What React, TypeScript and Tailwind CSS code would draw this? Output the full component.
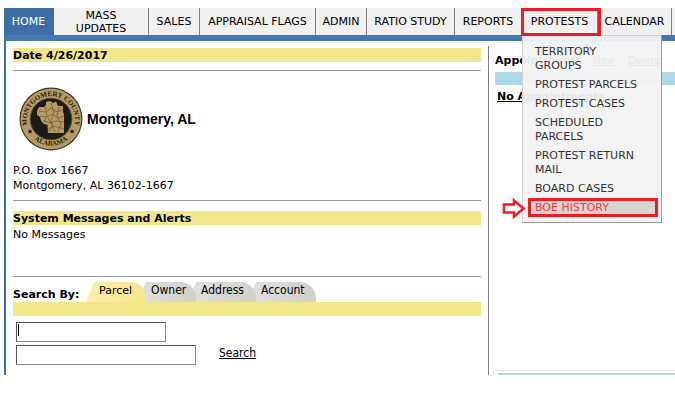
import clsx from 'clsx';

const NAV_ITEMS = [
  { label: 'HOME', width: 'w-[50px]', active: true },
  { label: 'MASS UPDATES', width: 'w-[95px]' },
  { label: 'SALES', width: 'w-[51px]' },
  { label: 'APPRAISAL FLAGS', width: 'w-[116px]' },
  { label: 'ADMIN', width: 'w-[51px]' },
  { label: 'RATIO STUDY', width: 'w-[88px]' },
  { label: 'REPORTS', width: 'w-[67px]' },
  { label: 'PROTESTS', width: 'w-[76px]', menu: true },
  { label: 'CALENDAR', width: 'w-[74px]' },
];

const PROTEST_ITEMS = [
  'TERRITORY GROUPS',
  'PROTEST PARCELS',
  'PROTEST CASES',
  'SCHEDULED PARCELS',
  'PROTEST RETURN MAIL',
  'BOARD CASES',
  'BOE HISTORY',
];

const TABS = [
  { label: 'Parcel', className: 'z-40 w-[60px] from-[#fbf0ae] to-[#f6e58a] pt-px' },
  { label: 'Owner', className: 'z-30 -ml-2 w-[58px]' },
  { label: 'Address', className: 'z-20 -ml-2 w-[68px]' },
  { label: 'Account', className: 'z-10 -ml-2 w-[68px]' },
];

const CONDENSED = "font-['DejaVu_Sans_Condensed','DejaVu_Sans',sans-serif]";

function ProtestsMenu() {
  return (
    <ul className="absolute top-[27px] left-0 z-10 w-[140px] border border-[#d0d0d0] border-r-[#999] border-b-[#999] bg-[#f2f2f3]/95 pt-[6px] pr-[3px] pb-[5px] pl-[5px] text-left text-[#333]">
      {PROTEST_ITEMS.map((item) => {
        const selected = item === 'BOE HISTORY';
        return (
          <li key={item} className={clsx('relative', selected && 'bg-[#d5d5d5] text-[#ff3333]')}>
            <a href="#" className="block pt-[3px] pr-3 pb-[2px] pl-[7px] leading-[14px]">
              {item}
            </a>
            {selected && (
              <>
                <span className="pointer-events-none absolute inset-0 border-3 border-[#ed1c24]" />
                <svg className="absolute top-0 -left-[26px] h-[21px] w-6" viewBox="0 0 24 21" fill="none" stroke="#ed1c24" strokeWidth="2.6">
                  <path d="M2 6.5H12V2.5L21.5 10.5L12 18.5V14.5H2Z" />
                </svg>
              </>
            )}
          </li>
        );
      })}
    </ul>
  );
}

function NavBar() {
  return (
    <nav className="border-b-6 border-[#4677b0] bg-[#f0f0f0]">
      <ul className="flex h-[27px]">
        {NAV_ITEMS.map(({ label, width, active, menu }) => (
          <li
            key={label}
            className={clsx(
              'relative shrink-0 border-r text-center',
              width,
              active ? 'border-[#3d6da5] bg-[#3d6da5] text-white' : 'border-[#808080]',
            )}
          >
            <a href="#" className="flex h-full items-center justify-center px-[6px] leading-[13px]">
              {label}
            </a>
            {menu && (
              <>
                <ProtestsMenu />
                <span className="pointer-events-none absolute top-0 -right-1 -bottom-px -left-px z-20 border-3 border-[#ed1c24]" />
              </>
            )}
          </li>
        ))}
      </ul>
    </nav>
  );
}

function CountySeal() {
  return (
    <svg className="size-16" viewBox="0 0 64 64" role="img" aria-label="Montgomery County Alabama seal">
      <defs>
        <path id="seal-top" d="M12.4 47A24 24 0 1 1 51.6 47" />
        <path id="seal-bottom" d="M8 44A27 27 0 0 0 56 44" />
      </defs>
      <circle cx="32" cy="32" r="31.5" fill="#423a2b" />
      <circle cx="32" cy="32" r="29.8" fill="#b59b62" stroke="#c8b27b" strokeWidth=".7" />
      <circle cx="32" cy="32" r="20.8" fill="#1d1b19" stroke="#594b32" strokeWidth="1" />
      <path
        d="M18 24L20 20H25L27 18V15L31 14L34 16L37 14.5L39 19H44V25L45 27V46H29L28.5 38L25 37L22 34L21 30L18 28Z"
        fill="#b59b62"
      />
      <path
        d="M20 24L27 25L32 21L38 25L44 23M21 29L28 30L33 27L39 31L45 29M26 20L28 28L25 35M32 16L35 25L32 35L36 45M40 20L38 29L42 37L39 45M25 34L31 36L37 34L45 35M29 42L35 39L45 42M29 31L34 39L30 45"
        fill="none"
        stroke="#5d4c30"
        strokeWidth=".6"
      />
      <g fill="#211b12" className="font-['Liberation_Serif',serif] text-[7px] font-bold">
        <text textAnchor="middle">
          <textPath href="#seal-top" startOffset="50%">MONTGOMERY COUNTY</textPath>
        </text>
        <text textAnchor="middle">
          <textPath href="#seal-bottom" startOffset="50%">ALABAMA</textPath>
        </text>
      </g>
      <path
        d="M11 42l.8 1.5 1.7.2-1.2 1.2.3 1.7-1.6-.8-1.5.8.3-1.7-1.2-1.2 1.7-.2zM53 42l.8 1.5 1.7.2-1.2 1.2.3 1.7-1.6-.8-1.5.8.3-1.7-1.2-1.2 1.7-.2z"
        fill="#211b12"
      />
    </svg>
  );
}

function SearchPanel() {
  const inputClass =
    'block h-5 border border-[#555] border-r-[#888] border-b-[#888] bg-white px-[2px] outline-none';

  return (
    <form onSubmit={(e) => e.preventDefault()}>
      <div className="mt-[5px] flex h-5">
        <span className="w-[73px] shrink-0 pt-[5px] font-bold">Search By:</span>
        {TABS.map(({ label, className }) => (
          <button
            key={label}
            type="button"
            className={clsx(
              'relative flex h-5 shrink-0 items-start rounded-tr-[16px] bg-linear-to-r pl-[13px] leading-4 [clip-path:polygon(8px_0,100%_0,100%_100%,0_100%)]',
              label !== 'Parcel' && ['from-[#e2e1de] to-[#d2d0ca] text-xs leading-4', CONDENSED],
              className,
            )}
          >
            {label}
          </button>
        ))}
      </div>
      <div className="h-[14px] bg-[#f0e68c]" />
      <div className="mt-[6px] space-y-[3px] pl-[3px]">
        <div className="relative">
          <input type="text" aria-label="Parcel" className={clsx(inputClass, 'w-[150px]')} />
          {/* text cursor */}
          <span className="absolute top-[2px] left-[2px] h-3 w-px bg-black" />
        </div>
        <div className="flex items-start">
          <input type="text" aria-label="Parcel detail" className={clsx(inputClass, 'w-[180px]')} />
          <a href="#" className={clsx('ml-[23px] text-xs leading-4 underline', CONDENSED)}>
            Search
          </a>
        </div>
      </div>
    </form>
  );
}

function Appointments() {
  return (
    <aside className="mt-[5px] flex w-[187px] shrink-0 flex-col border-l border-[#808080] pt-[7px]">
      <div className="flex pl-[6px] whitespace-nowrap">
        <h2 className="w-[98px] shrink-0 font-bold">Appointments</h2>
        <a href="#" className={clsx('w-[35px] shrink-0 underline', CONDENSED)}>New</a>
        <a href="#" className={clsx('underline', CONDENSED)}>Delete</a>
      </div>
      <div className="mt-1 ml-[6px] h-[13px] bg-[#add8e6]" />
      <p className="mt-1 pl-2 font-bold underline">No Appointments</p>
      <div className="mt-auto ml-1 border-t border-l border-[#e3e3e3] pt-[2px] pl-1">
        <div className="h-[2px] bg-[#add8e6]" />
      </div>
    </aside>
  );
}

export default function App() {
  return (
    <div className="overflow-hidden bg-white pt-2 pl-1 font-['DejaVu_Sans',Verdana,sans-serif] text-[11px] leading-[15px] text-black">
      <NavBar />
      <div className="flex border-l-2 border-[#3d6da5]">
        <main className="min-w-0 flex-1 pt-[7px] pr-[7px] pb-[10px] pl-[7px]">
          <h2 className="bg-[#f0e68c] pt-px leading-[13px] font-bold">Date 4/26/2017</h2>
          <hr className="mt-2 border-[#999]" />

          <div className="mt-4 flex items-center pl-[6px]">
            <CountySeal />
            <h1 className="ml-1 font-['Liberation_Sans',Arial,sans-serif] text-[14px] font-bold">Montgomery, AL</h1>
          </div>
          <address className="mt-3 not-italic">
            P.O. Box 1667
            <br />
            Montgomery, AL 36102-1667
          </address>
          <hr className="mt-[7px] border-[#999]" />

          <h2 className="mt-[10px] bg-[#f0e68c] pt-px leading-[13px] font-bold">System Messages and Alerts</h2>
          <p className="mt-[2px]">No Messages</p>
          <hr className="mt-[34px] border-[#999]" />

          <SearchPanel />
        </main>
        <Appointments />
      </div>
    </div>
  );
}
